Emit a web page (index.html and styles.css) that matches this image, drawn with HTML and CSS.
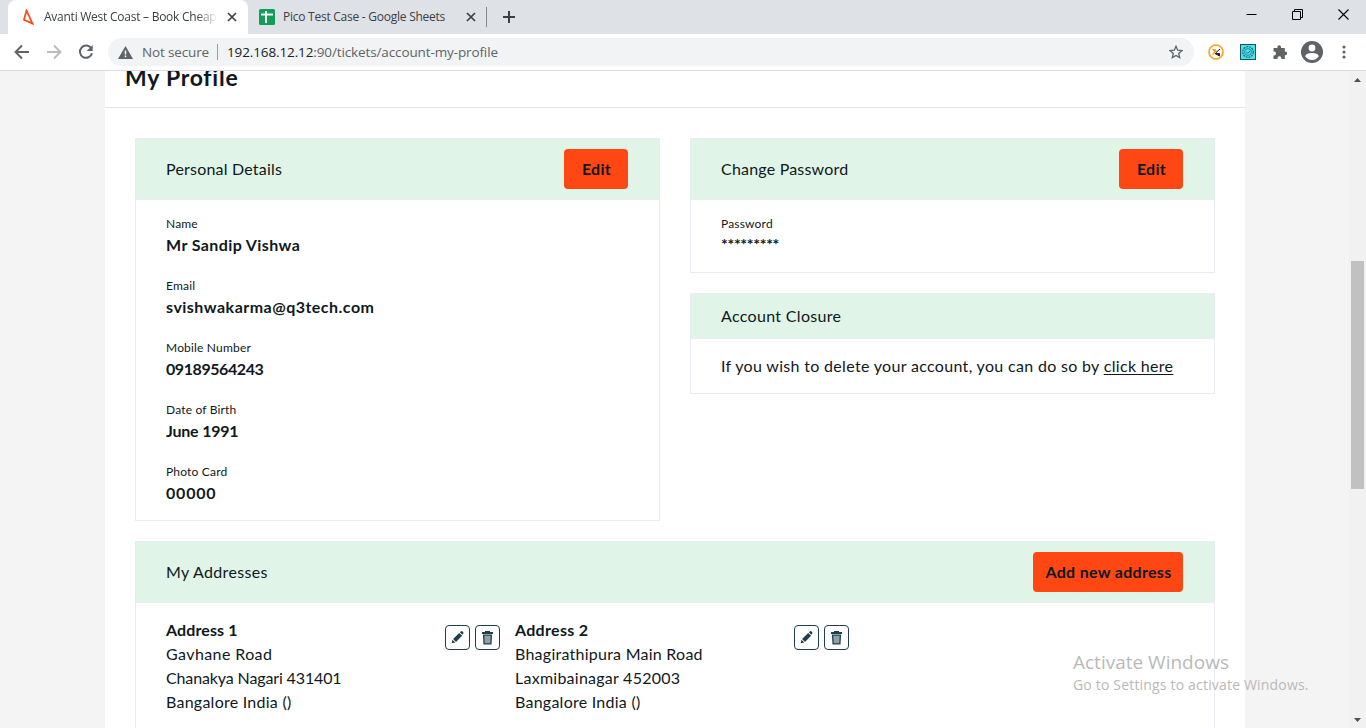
FILE: index.html
```html
<!DOCTYPE html>
<html lang="en">
<head>
<meta charset="utf-8">
<title>Avanti West Coast – Book Cheap</title>
<link rel="stylesheet" href="styles.css">
</head>
<body>
<svg class="defs" width="0" height="0">
  <symbol id="close" viewBox="0 0 10 10"><path d="M1 1l8 8M9 1L1 9" stroke="#3c4043" stroke-width="1.7"/></symbol>
  <symbol id="pencil" viewBox="0 0 13 13"><path d="M.7 12.3l.7-3.500 2.900 2.800zM2.100 8l6.100-6.100 2.900 2.900L5 10.900zM8.900 1.200l.9-.8q.9-.6 1.700.1l.6.6q.7.8 0 1.700l-.8.9z" fill="#1f3f4d"/></symbol>
  <symbol id="trash" viewBox="0 0 11 14"><path d="M3 0h5v1H11v2H0V1h3z" fill="#1f3f4d"/><path d="M1.600 4.200h7.800L8.900 12.900H2.100z" fill="#8fa0a8" stroke="#1f3f4d" stroke-width="1.300"/></symbol>
</svg>
<div class="window">
  <div class="tabstrip">
    <div class="tab tab-active">
      <svg class="favicon avanti" width="12" height="16" viewBox="0 0 12 16"><path d="M4.500 1.500L2 10.800 10.500 14.600z" fill="none" stroke="#ff4713" stroke-width="1.700"/></svg>
      <span class="tab-title t1">Avanti West Coast – Book Cheap</span>
      <svg class="tab-close" width="10" height="10"><use href="#close"/></svg>
    </div>
    <div class="tab tab-idle">
      <svg class="favicon" width="16" height="16" viewBox="0 0 16 16"><rect width="16" height="16" rx="1.500" fill="#0f9d58"/><path d="M2 5.500h12M7 2v12" stroke="#fff" stroke-width="2"/></svg>
      <span class="tab-title t2">Pico Test Case - Google Sheets</span>
      <svg class="tab-close" width="10" height="10"><use href="#close"/></svg>
    </div>
    <span class="tab-divider"></span>
    <svg class="new-tab" width="12" height="12" viewBox="0 0 12 12"><path d="M6 0v12M0 6h12" stroke="#3c4043" stroke-width="2"/></svg>
    <div class="controls">
      <svg width="11" height="11" viewBox="0 0 11 11"><path d="M.5 5.500h10" stroke="#000"/></svg>
      <svg width="11" height="11" viewBox="0 0 11 11"><path d="M.5 2.500h8v8h-8zM2.500 2.500v-2h8v8h-2" fill="none" stroke="#000"/></svg>
      <svg width="11" height="11" viewBox="0 0 11 11"><path d="M.5.5l10 10M10.500.5l-10 10" stroke="#000" stroke-width="1.100"/></svg>
    </div>
  </div>
  <div class="toolbar">
    <svg class="nav" width="16" height="16" viewBox="0 0 16 16"><path d="M15 8H2M8 1.500L1.500 8 8 14.500" fill="none" stroke="#5f6368" stroke-width="1.900"/></svg>
    <svg class="nav" width="16" height="16" viewBox="0 0 16 16"><path d="M1 8h13M8 1.500L14.500 8 8 14.500" fill="none" stroke="#babcbe" stroke-width="1.900"/></svg>
    <svg class="nav" width="16" height="16" viewBox="0 0 16 16"><path d="M13.300 4.500A6.100 6.100 0 1 0 14 9.200" fill="none" stroke="#5f6368" stroke-width="2"/><path d="M14.700 1v6H8.700z" fill="#5f6368"/></svg>
    <div class="omnibox">
      <svg width="15" height="13" viewBox="0 0 15 13"><path d="M7.500 0L15 13H0z" fill="#5f6368"/><path d="M7.500 4.500v4M7.500 9.500v1.700" stroke="#fff" stroke-width="1.500"/></svg>
      <span class="insecure">Not secure</span>
      <span class="omni-divider"></span>
      <span class="url"><b>192.168.12.12</b>:90/tickets/account-my-profile</span>
      <svg class="star" width="14" height="14" viewBox="0 0 14 14"><path d="M7 1.300l1.700 3.900 4.200.4-3.200 2.800 1 4.200L7 10.400l-3.700 2.200 1-4.200L1.100 5.600l4.200-.4z" fill="none" stroke="#5f6368" stroke-width="1.300"/></svg>
    </div>
    <div class="extensions">
      <svg width="16" height="16" viewBox="0 0 16 16"><circle cx="8" cy="8" r="7" fill="#fff" stroke="#f9a11b" stroke-width="1.600"/><path d="M4 5h3.500L9 7.500 7 9z" fill="#f9a11b"/><path d="M4.500 10.500L7 8" stroke="#f9a11b" stroke-width="1.400"/><path d="M12 5L8 8.700M7 9.500h4.500V12z" fill="#222" stroke="#222"/></svg>
      <svg width="16" height="16" viewBox="0 0 16 16"><rect x=".5" y=".5" width="15" height="15" fill="#4de1ee" stroke="#17535e"/><circle cx="8" cy="8" r="5.300" fill="none" stroke="#17717d" stroke-width="1.200" stroke-dasharray="2 .8"/><circle cx="8" cy="8" r="3.400" fill="none" stroke="#17717d" stroke-width=".8"/><path d="M6.300 8l1.300 1.300L10 7" fill="none" stroke="#17717d"/></svg>
      <svg width="16" height="16" viewBox="0 0 16 16"><path d="M1.500 4h3.900V3a1.800 1.800 0 0 1 3.600 0v1h3.800v3.600h.6a1.800 1.800 0 0 1 0 3.600h-.6V15H9.300v-.8a1.900 1.900 0 0 0-3.800 0v.8h-4v-3.600h.6a1.900 1.900 0 0 0 0-3.800h-.6z" fill="#5f6368"/></svg>
      <svg width="22" height="22" viewBox="0 0 22 22"><circle cx="11" cy="11" r="11" fill="#5f6368"/><circle cx="11" cy="7" r="3.400" fill="#fff"/><path d="M4.300 15.500q0-3.500 6.700-3.500t6.700 3.500Q15 19 11 19t-6.700-3.500z" fill="#fff"/></svg>
      <svg width="4" height="14" viewBox="0 0 4 14"><circle cx="2" cy="2" r="1.600" fill="#5f6368"/><circle cx="2" cy="7" r="1.600" fill="#5f6368"/><circle cx="2" cy="12" r="1.600" fill="#5f6368"/></svg>
    </div>
  </div>
  <div class="viewport">
    <main class="page">
      <h1 class="title">My Profile</h1>
      <div class="content">
        <div class="columns">
          <section class="card">
            <header class="card-head"><h2>Personal Details</h2><button class="btn">Edit</button></header>
            <dl class="details">
              <div><dt>Name</dt><dd class="name">Mr Sandip Vishwa</dd></div>
              <div><dt>Email</dt><dd class="email">svishwakarma@q3tech.com</dd></div>
              <div><dt>Mobile Number</dt><dd class="mobile">09189564243</dd></div>
              <div><dt>Date of Birth</dt><dd class="dob">June 1991</dd></div>
              <div><dt>Photo Card</dt><dd class="photo">00000</dd></div>
            </dl>
          </section>
          <div class="stack">
            <section class="card">
              <header class="card-head"><h2>Change Password</h2><button class="btn">Edit</button></header>
              <dl class="details password"><div><dt>Password</dt><dd class="masked">*********</dd></div></dl>
            </section>
            <section class="card">
              <header class="card-head compact"><h2 class="loose">Account Closure</h2></header>
              <p class="closure">If you wish to delete your account, you can do so by <a href="#">click here</a></p>
            </section>
          </div>
        </div>
        <section class="card addresses">
          <header class="card-head"><h2 class="loose">My Addresses</h2><button class="btn wide">Add new address</button></header>
          <div class="address-list">
            <article class="address">
              <div class="lines"><strong>Address 1</strong><span class="street">Gavhane Road</span><span class="area">Chanakya Nagari 431401</span><span>Bangalore India ()</span></div>
              <button class="icon-btn"><svg width="13" height="13"><use href="#pencil"/></svg></button>
              <button class="icon-btn"><svg width="11" height="14"><use href="#trash"/></svg></button>
            </article>
            <article class="address">
              <div class="lines"><strong class="loose">Address 2</strong><span>Bhagirathipura Main Road</span><span>Laxmibainagar 452003</span><span>Bangalore India ()</span></div>
              <button class="icon-btn"><svg width="13" height="13"><use href="#pencil"/></svg></button>
              <button class="icon-btn"><svg width="11" height="14"><use href="#trash"/></svg></button>
            </article>
          </div>
        </section>
      </div>
    </main>
    <div class="scrollbar">
      <svg width="7" height="4" viewBox="0 0 7 4"><path d="M3.500 0L7 4H0z" fill="#505050"/></svg>
      <span class="thumb"></span>
      <svg class="down" width="7" height="4" viewBox="0 0 7 4"><path d="M3.500 4L7 0H0z" fill="#505050"/></svg>
    </div>
  </div>
  <div class="watermark"><span class="wm-title">Activate Windows</span><span class="wm-sub">Go to Settings to activate Windows.</span></div>
</div>
</body>
</html>
```

FILE: styles.css
```css
* { box-sizing: border-box; }
body { margin: 0; font-family: Lato, sans-serif; color: #101820; }
h1, h2, p, dl, dd { margin: 0; }
svg { display: block; flex: none; }
.defs { position: absolute; }
.window { position: relative; width: 1366px; height: 728px; display: flex; flex-direction: column; overflow: hidden; }

.tabstrip { height: 34px; flex: none; background: #dee1e6; display: flex; align-items: center; font-family: "Open Sans", sans-serif; padding-left: 8px; }
.tab { display: flex; align-items: center; height: 34px; font-size: 12px; color: #3c4043; white-space: nowrap; }
.tab-active { width: 240px; background: #fff; border-radius: 8px 8px 0 0; padding-left: 14px; }
.tab-idle { width: 238px; padding-left: 11px; }
.favicon { margin-right: 8px; }
.avanti { margin-right: 10px; }
.tab-title { overflow: hidden; letter-spacing: -.25px; padding-bottom: 1px; }
.t1 { width: 174px; -webkit-mask-image: linear-gradient(90deg, #000 88%, transparent); }
.t2 { width: 174px; }
.tab-close { margin-left: 9px; }
.tab-divider { width: 1px; height: 20px; background: #85888c; }
.new-tab { margin-left: 16px; }
.controls { margin-left: auto; display: flex; gap: 35px; padding-right: 17px; margin-top: -6px; }

.toolbar { height: 37px; flex: none; background: #fff; border-bottom: 1px solid #dadce0; display: flex; align-items: center; padding-left: 14px; }
.nav { margin-right: 16px; }
.omnibox { width: 1086px; height: 28px; margin-left: -2px; border-radius: 14px; background: #f1f3f4; display: flex; align-items: center; padding-left: 10px; font: 14px "Open Sans", sans-serif; color: #5f6368; white-space: nowrap; }
.insecure { margin-left: 9px; width: 68px; font-size: 13.500px; letter-spacing: -.15px; }
.omni-divider { width: 1px; height: 16px; margin: 0 9px 0 7px; background: #9aa0a6; }
.url { font-size: 13.500px; letter-spacing: -.12px; }
.url b { font-weight: 400; color: #202124; }
.star { margin-left: auto; margin-right: 11px; }
.extensions { display: flex; align-items: center; gap: 16px; margin-left: 14px; }
.extensions svg:nth-child(4) { margin-left: -3px; }
.extensions svg:nth-child(5) { margin-left: 3px; }

.viewport { height: 657px; display: flex; background: #f4f4f4; overflow: hidden; }
.page { width: 1140px; margin-left: 105px; background: #fff; }
.title { height: 46px; margin-top: -9px; border-bottom: 1px solid #e4e4e4; padding-left: 20px; font-size: 23px; line-height: 30px; letter-spacing: .75px; }
.content { padding: 30px 30px 0; }
.columns { display: grid; grid-template-columns: 525px 525px; gap: 30px; }
.card { border: 1px solid #e8edf2; background: #fff; }
.card-head { height: 61px; background: #e0f4e8; border-bottom: 1px solid #e8edf2; display: flex; align-items: center; justify-content: space-between; padding: 0 31px 0 30px; }
.card-head h2 { font-size: 16px; font-weight: 400; line-height: 24px; letter-spacing: .2px; }
.card-head h2.loose { letter-spacing: .32px; }
.card-head.compact { height: 45px; }
.btn { width: 64px; height: 40px; border: 0; padding: 0 0 0 1px; border-radius: 4px; background: #ff4713; color: #101820; font: 700 16px/24px Lato, sans-serif; letter-spacing: .3px; }
.btn.wide { width: 150px; }
.details { height: 320px; padding: 13px 30px 0; }
.details > div { height: 62px; }
.details dt { font-size: 12px; line-height: 22px; letter-spacing: .18px; }
.details dd { font-size: 16px; font-weight: 700; line-height: 20px; }
.name { letter-spacing: .4px; }
.email { letter-spacing: .48px; }
.mobile { letter-spacing: -.43px; }
.dob { letter-spacing: -.2px; }
.photo { letter-spacing: .8px; }
.details .masked { letter-spacing: -.35px; line-height: 18px; }
.details.password { height: 72px; }
.stack { display: flex; flex-direction: column; gap: 20px; }
.closure { height: 54px; padding: 15px 30px; font-size: 16px; line-height: 24px; letter-spacing: .32px; white-space: nowrap; }
.closure a { color: inherit; text-underline-offset: 2px; }
.addresses { margin-top: 20px; height: 220px; }
.address-list { display: flex; gap: 15px; padding: 15px 30px; }
.address { width: 334px; display: flex; align-items: flex-start; gap: 5px; }
.lines { flex: 1; display: flex; flex-direction: column; font-size: 16px; line-height: 24px; letter-spacing: .25px; white-space: nowrap; }
.lines strong { letter-spacing: .1px; }
.lines .loose { letter-spacing: .3px; }
.street { letter-spacing: .4px; }
.area { letter-spacing: -.13px; }
.icon-btn { width: 25px; height: 25px; margin-top: 7px; padding: 0; border: 1px solid #1f3f4d; border-radius: 4px; background: #fff; display: flex; align-items: center; justify-content: center; }
.scrollbar { width: 17px; margin-left: 104px; background: #f1f1f1; display: flex; flex-direction: column; align-items: center; padding: 7px 0 6px; }
.thumb { width: 13px; height: 228px; margin-top: 179px; background: #c1c1c1; }
.down { margin-top: auto; }
.watermark { position: absolute; left: 1073px; top: 651px; display: flex; flex-direction: column; font-family: "Open Sans", sans-serif; color: #b9b9b9; white-space: nowrap; }
.wm-title { font-size: 19px; line-height: 23px; }
.wm-sub { font-size: 14px; line-height: 21px; letter-spacing: .18px; }
```
